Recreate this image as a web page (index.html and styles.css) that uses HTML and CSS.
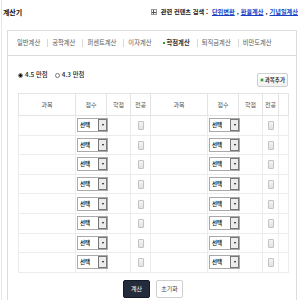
FILE: index.html
```html
<!DOCTYPE html>
<html lang="ko">
<head>
<meta charset="utf-8">
<title>계산기</title>
<link rel="stylesheet" href="styles.css">
</head>
<body>
<div class="page">
  <header class="top">
    <h1 class="title">계산기</h1>
    <div class="related">
      <span class="plus-box"></span>
      <span class="related-label">관련 컨텐츠 검색 :</span>
      <a href="#">단위변환</a><span class="comma">,</span><a href="#">환율계산</a><span class="comma">,</span><a href="#">기념일계산</a>
    </div>
  </header>
  <section class="panel">
    <nav class="tabs">
      <a class="tab" href="#">일반계산</a>
      <a class="tab" href="#">공학계산</a>
      <a class="tab" href="#">퍼센트계산</a>
      <a class="tab" href="#">이자계산</a>
      <a class="tab active" href="#">학점계산</a>
      <a class="tab" href="#">퇴직금계산</a>
      <a class="tab" href="#">비만도계산</a>
    </nav>
    <div class="content">
      <div class="options">
        <div class="radios">
          <label class="radio"><input type="radio" name="scale" checked>4.5 만점</label>
          <label class="radio"><input type="radio" name="scale">4.3 만점</label>
        </div>
        <button class="add-btn" type="button"><span class="green-dot"></span>과목추가</button>
      </div>
      <table class="grade">
        <colgroup>
          <col class="c-name"><col class="c-score"><col class="c-credit"><col class="c-major">
          <col class="c-name2"><col class="c-score"><col class="c-credit"><col class="c-major2"><col class="c-extra">
        </colgroup>
        <thead>
          <tr>
            <th>과목</th><th>점수</th><th>학점</th><th>전공</th>
            <th>과목</th><th>점수</th><th>학점</th><th>전공</th><th></th>
          </tr>
        </thead>
        <tbody>
          <tr><td></td><td><span class="sel"><span class="sel-text">선택</span><span class="sel-btn"></span></span></td><td></td><td><input class="chk" type="checkbox"></td><td></td><td><span class="sel"><span class="sel-text">선택</span><span class="sel-btn"></span></span></td><td></td><td><input class="chk" type="checkbox"></td><td></td></tr>
          <tr><td></td><td><span class="sel"><span class="sel-text">선택</span><span class="sel-btn"></span></span></td><td></td><td><input class="chk" type="checkbox"></td><td></td><td><span class="sel"><span class="sel-text">선택</span><span class="sel-btn"></span></span></td><td></td><td><input class="chk" type="checkbox"></td><td></td></tr>
          <tr><td></td><td><span class="sel"><span class="sel-text">선택</span><span class="sel-btn"></span></span></td><td></td><td><input class="chk" type="checkbox"></td><td></td><td><span class="sel"><span class="sel-text">선택</span><span class="sel-btn"></span></span></td><td></td><td><input class="chk" type="checkbox"></td><td></td></tr>
          <tr><td></td><td><span class="sel"><span class="sel-text">선택</span><span class="sel-btn"></span></span></td><td></td><td><input class="chk" type="checkbox"></td><td></td><td><span class="sel"><span class="sel-text">선택</span><span class="sel-btn"></span></span></td><td></td><td><input class="chk" type="checkbox"></td><td></td></tr>
          <tr><td></td><td><span class="sel"><span class="sel-text">선택</span><span class="sel-btn"></span></span></td><td></td><td><input class="chk" type="checkbox"></td><td></td><td><span class="sel"><span class="sel-text">선택</span><span class="sel-btn"></span></span></td><td></td><td><input class="chk" type="checkbox"></td><td></td></tr>
          <tr><td></td><td><span class="sel"><span class="sel-text">선택</span><span class="sel-btn"></span></span></td><td></td><td><input class="chk" type="checkbox"></td><td></td><td><span class="sel"><span class="sel-text">선택</span><span class="sel-btn"></span></span></td><td></td><td><input class="chk" type="checkbox"></td><td></td></tr>
          <tr><td></td><td><span class="sel"><span class="sel-text">선택</span><span class="sel-btn"></span></span></td><td></td><td><input class="chk" type="checkbox"></td><td></td><td><span class="sel"><span class="sel-text">선택</span><span class="sel-btn"></span></span></td><td></td><td><input class="chk" type="checkbox"></td><td></td></tr>
          <tr><td></td><td><span class="sel"><span class="sel-text">선택</span><span class="sel-btn"></span></span></td><td></td><td><input class="chk" type="checkbox"></td><td></td><td><span class="sel"><span class="sel-text">선택</span><span class="sel-btn"></span></span></td><td></td><td><input class="chk" type="checkbox"></td><td></td></tr>
        </tbody>
      </table>
      <div class="actions">
        <button class="btn-calc" type="button">계산</button>
        <button class="btn-reset" type="button">초기화</button>
      </div>
    </div>
  </section>
</div>
</body>
</html>
```

FILE: styles.css
```css
html, body {
  margin: 0;
  padding: 0;
  background: #fff;
}
body {
  width: 300px;
  height: 300px;
  overflow: hidden;
  font-family: "Noto Sans CJK KR", "Noto Sans", sans-serif;
  font-size: 6px;
  color: #444;
}
.page {
  margin-left: 1px;
  border-left: 1px solid #dfe7f2;
  padding-left: 1px;
  height: 300px;
}
.top {
  display: flex;
  justify-content: space-between;
  align-items: flex-start;
  height: 30px;
  padding: 7px 2px 0 0;
  box-sizing: border-box;
}
.title {
  margin: 0;
  font-size: 7px;
  font-weight: 700;
  color: #111;
  line-height: 10px;
  letter-spacing: -0.1px;
}
.related {
  display: flex;
  align-items: center;
  height: 10px;
  line-height: 10px;
  font-size: 6.2px;
  color: #222;
  font-weight: 600;
}
.plus-box {
  width: 4px;
  height: 4px;
  border: 1px solid #999;
  margin-right: 4px;
  position: relative;
  background: #f4f4f4;
}
.plus-box::before, .plus-box::after {
  content: "";
  position: absolute;
  background: #555;
}
.plus-box::before { left: 0; top: 1.5px; width: 4px; height: 1px; }
.plus-box::after { left: 1.5px; top: 0; width: 1px; height: 4px; }
.related-label { margin-right: 4px; }
.related a {
  color: #1b3fc4;
  text-decoration: underline;
}
.comma { margin: 0 2px; }
.panel {
  margin-left: 4px;
  width: 288px;
  border: 1px solid #dcdcdc;
  border-bottom: none;
  height: 275px;
}
.tabs {
  display: flex;
  align-items: center;
  height: 24px;
  border-bottom: 1px solid #dcdcdc;
  padding-left: 9px;
  font-size: 6.3px;
}
.tab {
  line-height: 8px;
  color: #5a5a5a;
  text-decoration: none;
  padding: 0 7px 0 4px;
  border-left: 1px solid #d8d8d8;
  white-space: nowrap;
}
.tab:first-child {
  border-left: none;
  padding-left: 0;
}
.tab.active {
  border-left: none;
  padding-left: 4px;
  font-weight: 700;
  color: #333;
  display: flex;
  align-items: center;
}
.tab.active::before {
  content: "";
  width: 2px;
  height: 2px;
  background: #3b9b2a;
  margin-right: 2px;
}
.content {
  padding: 13px 0 0 10px;
  width: 270px;
}
.options {
  display: flex;
  justify-content: space-between;
  align-items: flex-start;
  height: 24px;
}
.radios {
  display: flex;
  align-items: center;
  height: 12px;
  gap: 7px;
  color: #222;
  font-size: 6.4px;
  font-weight: 500;
}
.radio {
  display: flex;
  align-items: center;
  line-height: 12px;
}
.radio input {
  appearance: none;
  -webkit-appearance: none;
  width: 5px;
  height: 5px;
  margin: 0 2px 0 0;
  border: 1px solid #777;
  border-radius: 50%;
  background: #fff;
}
.radio input:checked {
  background: radial-gradient(circle, #111 0 1.3px, #fff 1.6px);
}
.add-btn {
  margin-top: 4px;
  height: 14px;
  padding: 0 2px 0 3px;
  display: flex;
  align-items: center;
  border: 1px solid #cfcfcf;
  border-radius: 2px;
  background: linear-gradient(#fff, #f1f1f1);
  font-family: inherit;
  font-size: 5.5px;
  color: #333;
  font-weight: 600;
}
.green-dot {
  width: 2px;
  height: 2px;
  background: #2f9d2f;
  margin-right: 2px;
  box-shadow: 0 0 0 0.5px #6cc46c;
}
.grade {
  width: 270px;
  table-layout: fixed;
  border-collapse: collapse;
  border: 1px solid #e2e2e2;
}
.c-name { width: 57px; }
.c-score { width: 31px; }
.c-credit { width: 24px; }
.c-major { width: 20px; }
.c-name2 { width: 57px; }
.c-major2 { width: 16px; }
.c-extra { width: 10px; }
.grade thead tr { height: 22px; }
.grade tbody tr { height: 19.6px; }
.grade th {
  font-weight: 400;
  color: #555;
  border: 1px solid #e4e4e4;
  padding: 0;
  line-height: 8px;
}
.grade td {
  border: 1px solid #ececec;
  padding: 0;
  text-align: center;
  vertical-align: middle;
}
.grade td:nth-child(2), .grade td:nth-child(6) {
  text-align: left;
}
.sel {
  display: inline-flex;
  width: 29px;
  height: 12px;
  border: 1px solid #a9a9a9;
  background: #fff;
  vertical-align: middle;
  margin-left: 1px;
}
.sel-text {
  flex: 1;
  line-height: 12px;
  padding-left: 2px;
  color: #222;
  font-weight: 600;
  font-size: 5.5px;
}
.sel-btn {
  width: 7px;
  border: 1px solid #777;
  background: #ececec;
  display: flex;
  align-items: center;
  justify-content: center;
}
.sel-btn::after {
  content: "";
  border-left: 1.5px solid transparent;
  border-right: 1.5px solid transparent;
  border-top: 2px solid #111;
}
.chk {
  appearance: none;
  -webkit-appearance: none;
  width: 6px;
  height: 9px;
  margin: 0;
  border: 1px solid #c3c3c3;
  border-radius: 1px;
  background: linear-gradient(#f5f5f5, #e2e2e2);
  vertical-align: middle;
}
.actions {
  display: flex;
  justify-content: center;
  gap: 6px;
  margin-top: 7px;
}
.actions button {
  width: 27px;
  height: 18px;
  font-family: inherit;
  font-size: 6px;
  padding: 0;
  border-radius: 2px;
}
.btn-calc {
  background: #242b3a;
  border: 1px solid #141a26;
  color: #fff;
}
.btn-reset {
  background: #fff;
  border: 1px solid #cfcfcf;
  color: #444;
}
```
